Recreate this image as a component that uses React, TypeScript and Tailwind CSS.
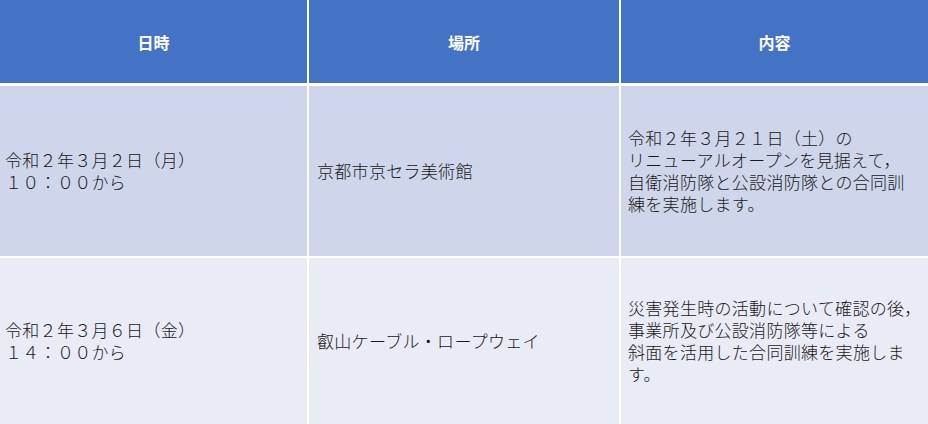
import React from "react";

const rows = [
  {
    date: ["令和２年３月２日（月）", "１０：００から"],
    place: "京都市京セラ美術館",
    content: [
      "令和２年３月２１日（土）の",
      "リニューアルオープンを見据えて，",
      "自衛消防隊と公設消防隊との合同訓",
      "練を実施します。",
    ],
    bg: "bg-[#cfd5ea]",
    h: "h-[170px]",
  },
  {
    date: ["令和２年３月６日（金）", "１４：００から"],
    place: "叡山ケーブル・ロープウェイ",
    content: [
      "災害発生時の活動について確認の後，",
      "事業所及び公設消防隊等による",
      "斜面を活用した合同訓練を実施しま",
      "す。",
    ],
    bg: "bg-[#e9ebf5]",
    h: "h-[166px]",
  },
];

export default function App() {
  return (
    <div
      className="w-[928px] h-[424px] overflow-hidden bg-white flex flex-col text-[#1a1a1a]"
      style={{ fontFamily: '"Noto Sans CJK JP", "Noto Sans", sans-serif' }}
    >
      {/* Header */}
      <div className="grid grid-cols-[307px_310px_1fr] gap-x-[2px] h-[83px] mb-[3px]">
        {["日時", "場所", "内容"].map((t) => (
          <div
            key={t}
            className="bg-[#4472c4] flex items-center justify-center text-white font-bold text-[16px]"
          >
            {t}
          </div>
        ))}
      </div>

      {/* Body */}
      <div className="flex flex-col gap-y-[2px]">
        {rows.map((r, i) => (
          <div
            key={i}
            className={`grid grid-cols-[307px_310px_1fr] gap-x-[2px] font-light tracking-[0.3px] ${r.h}`}
          >
            <div className={`${r.bg} flex flex-col justify-center pl-[5px] text-[17px] leading-[22px]`}>
              {r.date.map((l) => (
                <div key={l}>{l}</div>
              ))}
            </div>
            <div className={`${r.bg} flex items-center pl-[8px] text-[17px] leading-[22px]`}>
              {r.place}
            </div>
            <div className={`${r.bg} flex flex-col justify-center pl-[7px] text-[17px] leading-[22px] whitespace-nowrap`}>
              {r.content.map((l) => (
                <div key={l}>{l}</div>
              ))}
            </div>
          </div>
        ))}
      </div>
    </div>
  );
}
